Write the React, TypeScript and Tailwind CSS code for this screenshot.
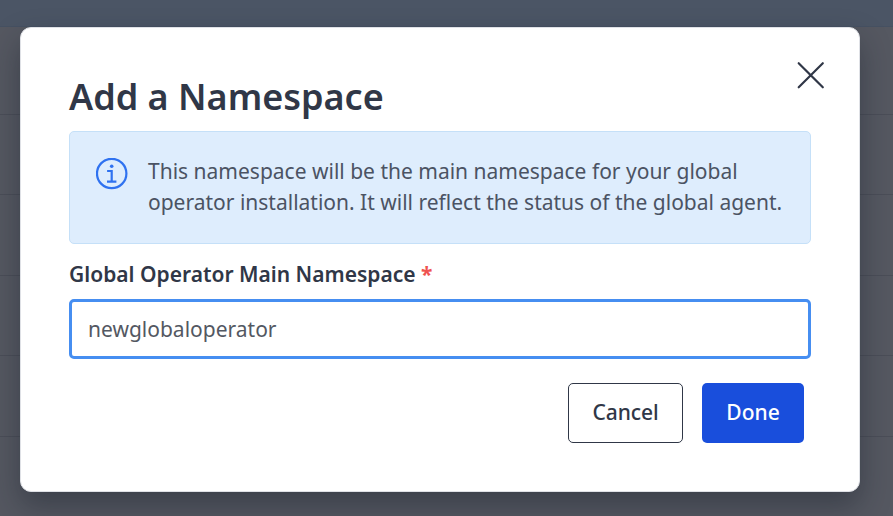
function CloseIcon() {
  return (
    <svg width="28" height="28" viewBox="0 0 28 28" fill="none" stroke="#303747" strokeWidth="2.2" strokeLinecap="round">
      <path d="M1.7 2.2 25.8 26.3M25.8 2.2 1.7 26.3" />
    </svg>
  );
}

function InfoIcon() {
  return (
    <svg className="shrink-0" width="32" height="32" viewBox="0 0 32 32" fill="none" stroke="#2f72f0" strokeWidth="2">
      <circle cx="15.7" cy="15.5" r="14.7" strokeWidth="2.2" />
      <path d="M11.1 13h4.6v10.6M11 23.6h9.4" strokeWidth="2.2" />
      <circle cx="15.7" cy="8.2" r="1.8" fill="#2f72f0" stroke="none" />
    </svg>
  );
}

function Backdrop() {
  return (
    <div className="flex h-full flex-col bg-[#555861]" aria-hidden="true">
      <div className="h-[27px] shrink-0 border-b border-[#465162] bg-[#4b5565]" />
      <div className="h-[88px] shrink-0 border-b border-[#4b4e58]" />
      <div className="h-[80px] shrink-0 border-b border-[#4b4e58]" />
      <div className="h-[81px] shrink-0 border-b border-[#4b4e58]" />
      <div className="h-[80px] shrink-0 border-b border-[#4b4e58]" />
      <div className="h-[81px] shrink-0 border-b border-[#4b4e58]" />
      <div className="grow" />
    </div>
  );
}

export default function App() {
  return (
    <div className="relative h-[516px] w-[893px] overflow-hidden font-['Noto_Sans',sans-serif] text-[21px] text-[#303747]">
      <Backdrop />
      <div
        role="dialog"
        className="absolute top-[27px] left-[20px] flex h-[465px] w-[840px] flex-col rounded-[11px] border border-[#dfe1e6] bg-white pr-12 pl-12 shadow-[0_14px_30px_rgba(20,28,40,0.4)]"
      >
        <div className="flex h-[103px] shrink-0 items-start justify-between">
          <h1 className="mt-[44px] text-[36px] leading-[50px] font-semibold whitespace-nowrap">Add a Namespace</h1>
          <button className="mt-[33px] -mr-[14px]" aria-label="Close">
            <CloseIcon />
          </button>
        </div>
        <div className="flex h-[113px] shrink-0 gap-5 rounded-[5px] border border-[#c5e0f8] bg-[#deedfd] pt-[26px] pl-[26px]">
          <InfoIcon />
          <p className="-mt-[2px] leading-[31px] whitespace-nowrap text-[#4b5363]">
            This namespace will be the main namespace for your global
            <br />
            operator installation. It will reflect the status of the global agent.
          </p>
        </div>
        <label className="mt-[14px] h-[32px] shrink-0 leading-[32px] font-semibold whitespace-nowrap">
          Global Operator Main Namespace <span className="font-bold text-[#ef5350]">*</span>
        </label>
        <input
          className="mt-[9px] h-[60px] shrink-0 rounded-[5px] border-3 border-[#468ef1] px-4 pb-px text-[#535862] outline-none"
          defaultValue="newglobaloperator"
        />
        <div className="mt-[24px] mr-[7px] flex h-[60px] shrink-0 justify-end gap-[19px] font-medium">
          <button className="w-[115px] rounded-[5px] border border-[#303747] pb-px tracking-[-0.1px]">Cancel</button>
          <button className="w-[102px] rounded-[5px] bg-[#194edc] pb-px text-white">Done</button>
        </div>
      </div>
    </div>
  );
}
